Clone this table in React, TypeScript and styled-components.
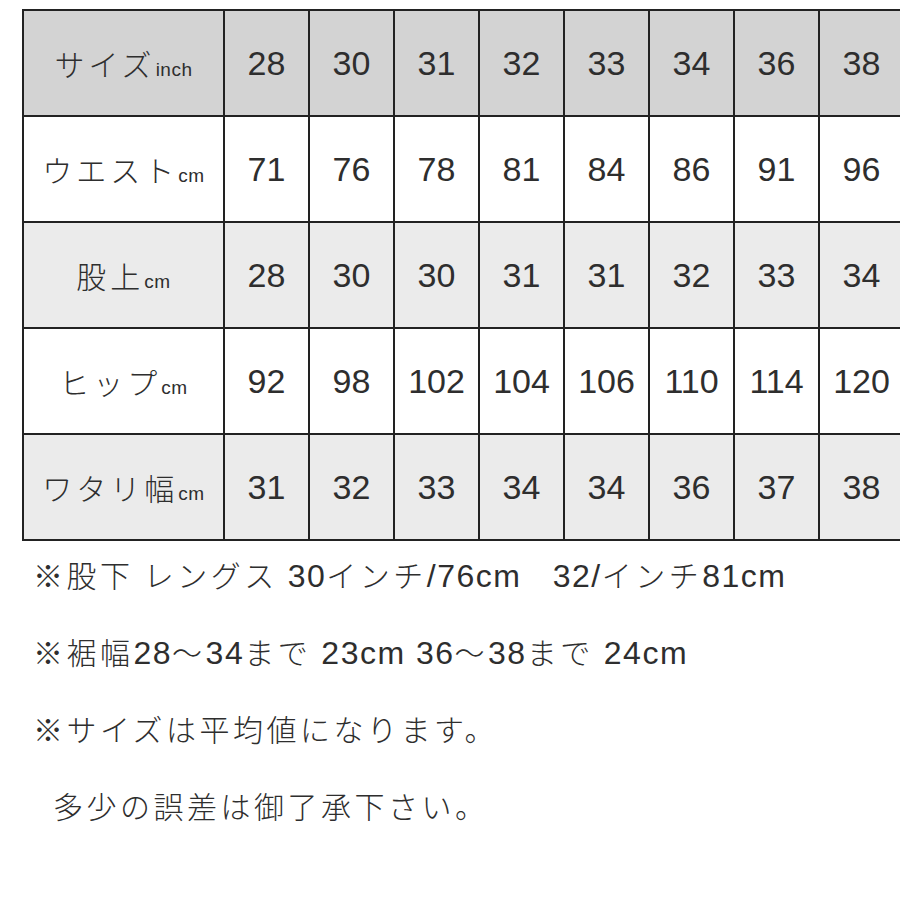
import * as React from "react";
import styled, {createGlobalStyle} from "styled-components";

const GlobalStyle = createGlobalStyle`
  html, body {
    margin: 0;
    padding: 0;
    background: #ffffff;
    overflow: hidden;
  }
  body {
    font-family: "Liberation Sans", "Noto Sans CJK JP", sans-serif;
    color: #2f2f2f;
  }
`;

const Page = styled.div`
  width: 900px;
  height: 900px;
  padding: 9px 0 0 22px;
  box-sizing: border-box;
`;

const SizeTable = styled.div`
  display: grid;
  grid-template-columns: 201px repeat(8, 85px);
  grid-auto-rows: 106px;
  width: max-content;
  border-top: 2px solid #222;
  border-left: 2px solid #222;
`;

const Cell = styled.div<{ $shade: "dark" | "light" | "none" }>`
  display: flex;
  align-items: center;
  justify-content: center;
  box-sizing: border-box;
  border-right: 2px solid #222;
  border-bottom: 2px solid #222;
  background: ${p => p.$shade === "dark" ? "#d3d3d3" : p.$shade === "light" ? "#ebebeb" : "#ffffff"};
  font-size: 34px;
  color: #2e2e2e;
`;

const Label = styled.span`
  font-family: "Noto Sans CJK JP", sans-serif;
  font-weight: 300;
  font-size: 30px;
  letter-spacing: 4px;
  color: #2e2e2e;
  white-space: nowrap;
`;

const Unit = styled.span`
  font-family: "Liberation Sans", sans-serif;
  font-size: 19px;
  letter-spacing: 0.5px;
`;

const Notes = styled.div`
  display: flex;
  flex-direction: column;
  gap: 39px;
  padding: 14px 0 0 11px;
`;

const Note = styled.div<{ $indent?: boolean }>`
  height: 38px;
  line-height: 38px;
  font-family: "Liberation Sans", "Noto Sans CJK JP", sans-serif;
  font-size: 32px;
  letter-spacing: 1.5px;
  white-space: pre;
  color: #2e2e2e;
  padding-left: ${p => p.$indent ? "20px" : "0"};
`;

const Light = styled.span`
  font-family: "Noto Sans CJK JP", sans-serif;
  font-weight: 300;
  font-size: 30px;
  letter-spacing: 3.5px;
`;

type Row = { label: string, unit: string, shade: "dark" | "light" | "none", values: number[] };

const rows: Row[] = [
    {label: "サイズ", unit: "inch", shade: "dark", values: [28, 30, 31, 32, 33, 34, 36, 38]},
    {label: "ウエスト", unit: "cm", shade: "none", values: [71, 76, 78, 81, 84, 86, 91, 96]},
    {label: "股上", unit: "cm", shade: "light", values: [28, 30, 30, 31, 31, 32, 33, 34]},
    {label: "ヒップ", unit: "cm", shade: "none", values: [92, 98, 102, 104, 106, 110, 114, 120]},
    {label: "ワタリ幅", unit: "cm", shade: "light", values: [31, 32, 33, 34, 34, 36, 37, 38]},
];

const App = () =>
    <Page>
        <GlobalStyle/>
        <SizeTable>
            {rows.map(row =>
                <React.Fragment key={row.label}>
                    <Cell $shade={row.shade}>
                        <Label>{row.label}<Unit>{row.unit}</Unit></Label>
                    </Cell>
                    {row.values.map((v, i) =>
                        <Cell key={i} $shade={row.shade}>{v}</Cell>)}
                </React.Fragment>)}
        </SizeTable>
        <Notes>
            <Note><Light>※股下 レングス </Light>30<Light>インチ</Light>/76cm   32/<Light>インチ</Light>81cm</Note>
            <Note><Light>※裾幅</Light>28<Light>〜</Light>34<Light>まで </Light>23cm 36<Light>〜</Light>38<Light>まで </Light>24cm</Note>
            <Note><Light>※サイズは平均値になります。</Light></Note>
            <Note $indent><Light>多少の誤差は御了承下さい。</Light></Note>
        </Notes>
    </Page>;

export default App;
